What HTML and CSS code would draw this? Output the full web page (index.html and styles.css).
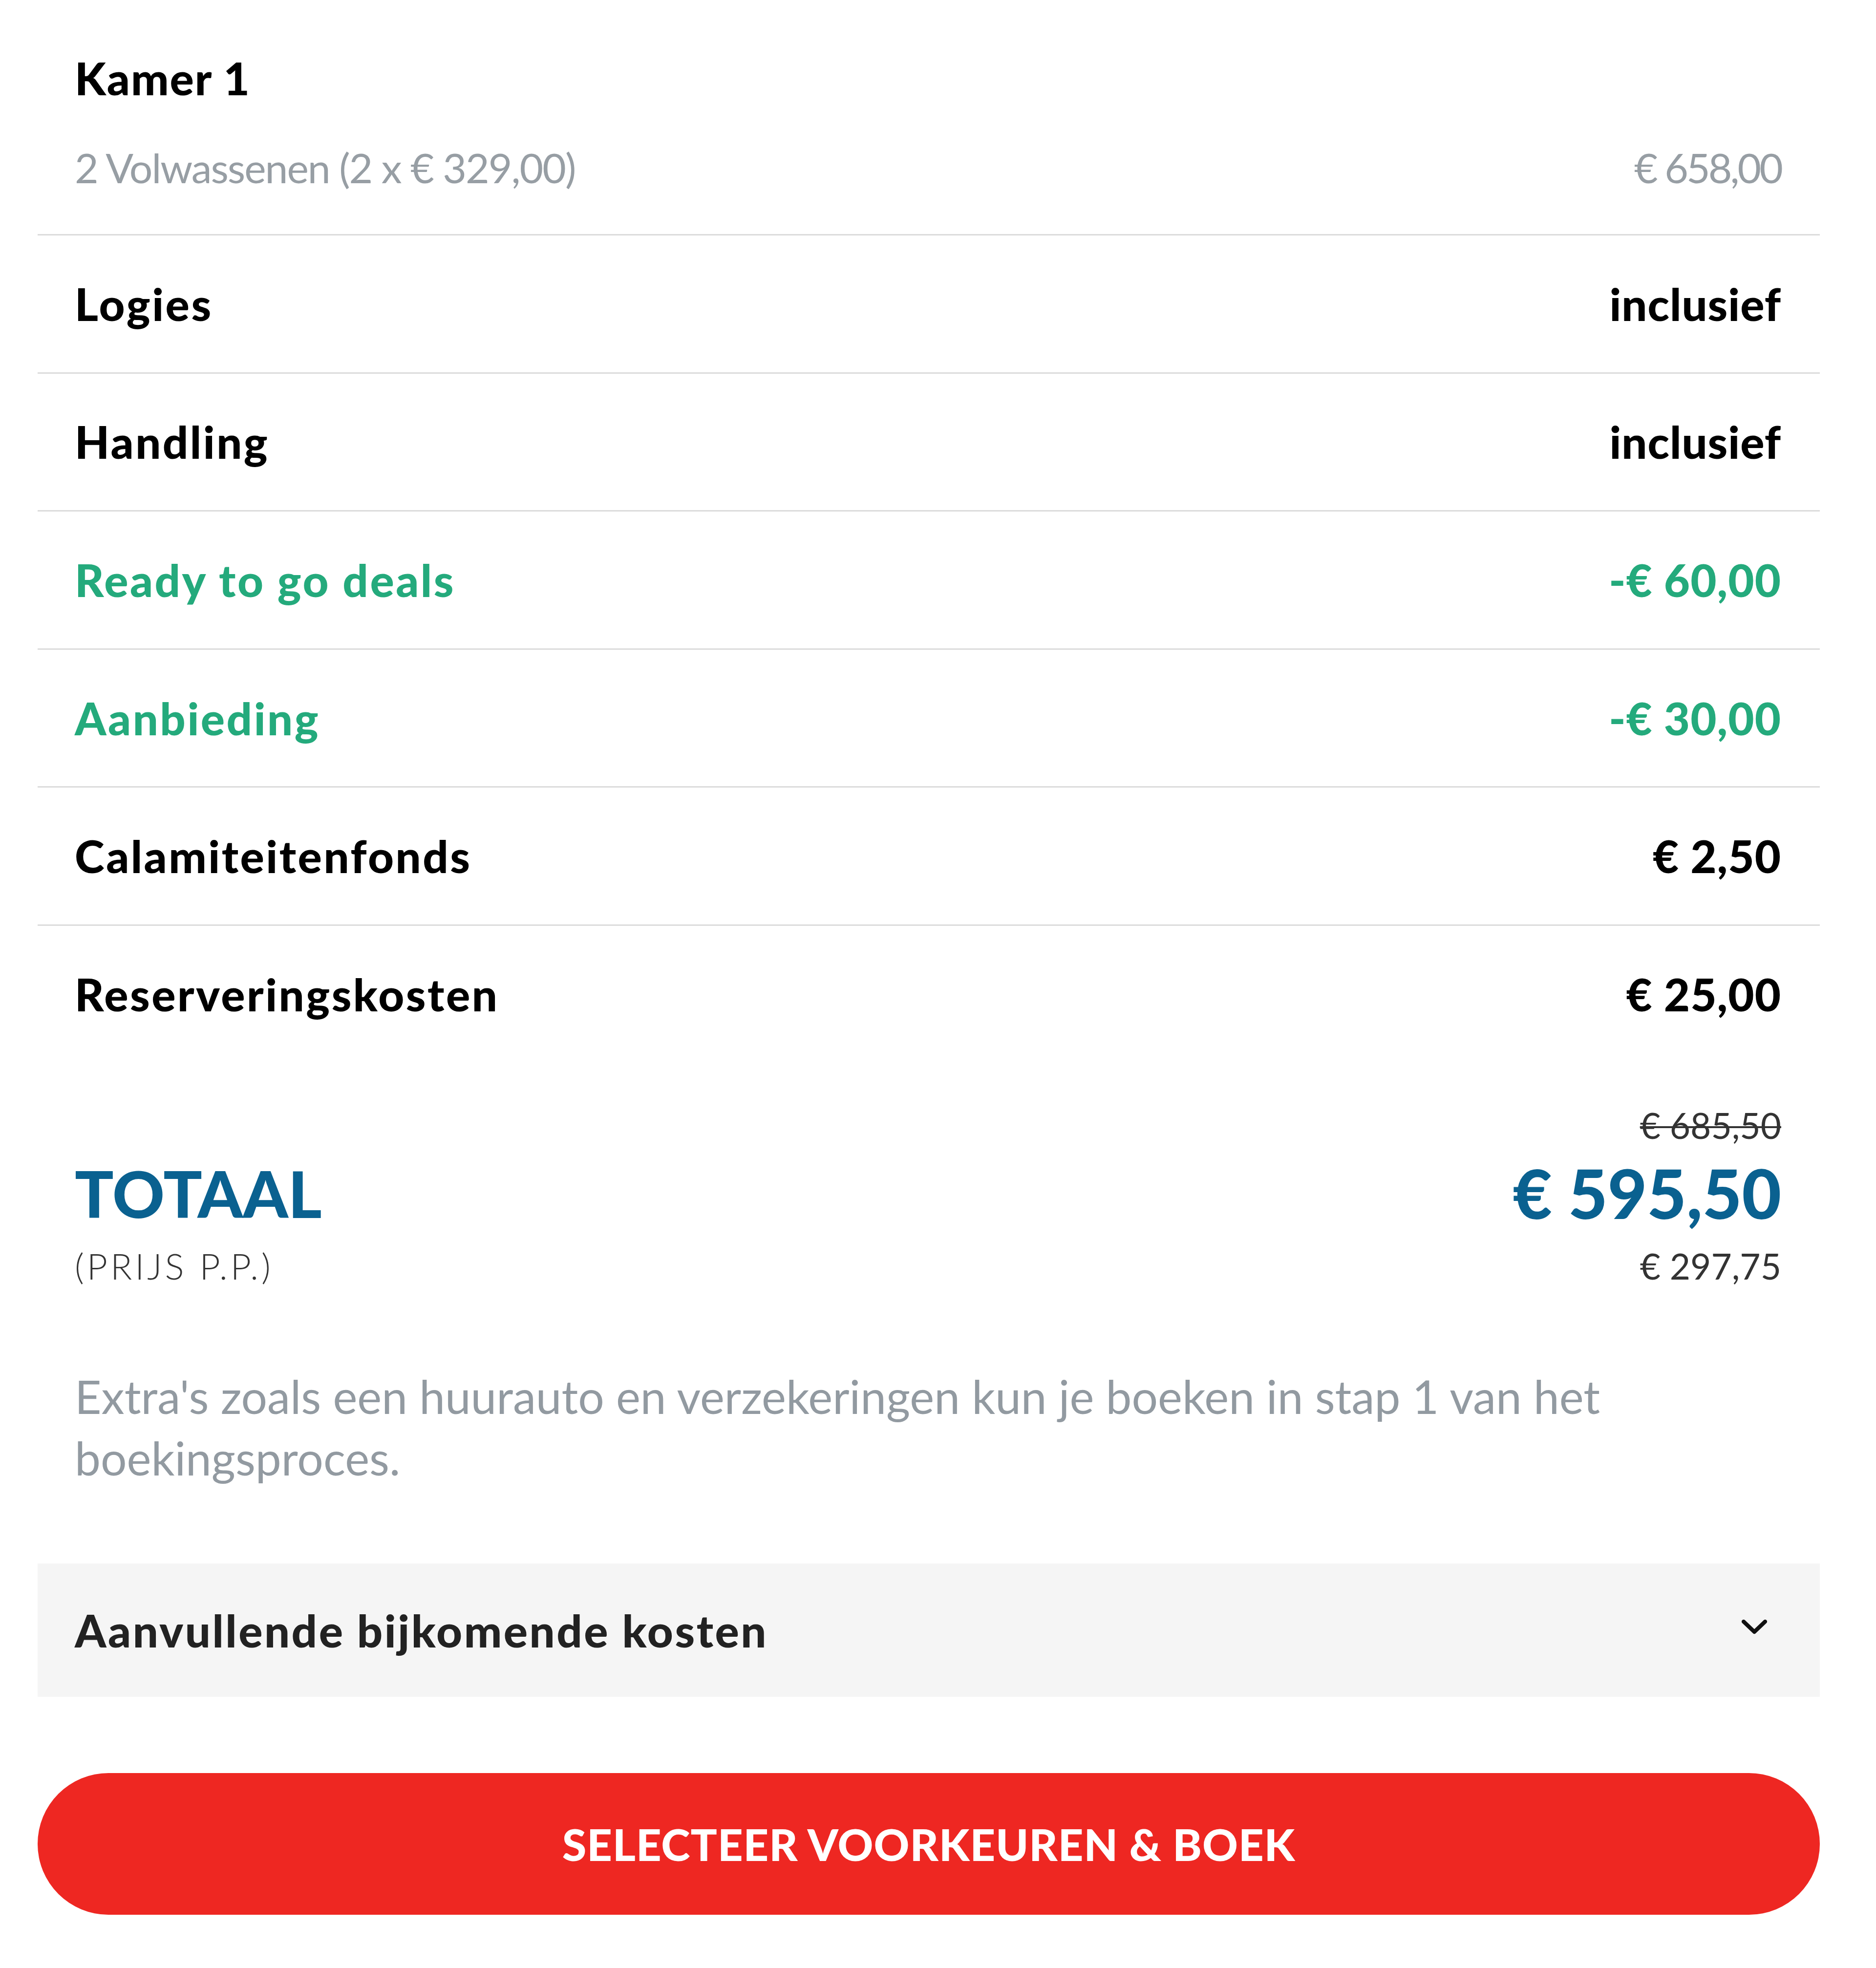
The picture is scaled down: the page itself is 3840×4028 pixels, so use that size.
FILE: index.html
```html
<!DOCTYPE html>
<html lang="nl">
<head>
<meta charset="utf-8">
<title>Prijsoverzicht</title>
<link rel="stylesheet" href="styles.css">
</head>
<body>
<main class="card">
  <section class="room">
    <div class="room-title">Kamer 1</div>
    <div class="room-line">
      <span>2 Volwassenen (2 x € 329,00)</span>
      <span class="room-price">€ 658,00</span>
    </div>
  </section>

  <div class="row"><span class="label">Logies</span><span class="value">inclusief</span></div>
  <div class="row"><span class="label">Handling</span><span class="value">inclusief</span></div>
  <div class="row discount"><span class="label">Ready to go deals</span><span class="value">-€ 60,00</span></div>
  <div class="row discount"><span class="label">Aanbieding</span><span class="value">-€ 30,00</span></div>
  <div class="row"><span class="label">Calamiteitenfonds</span><span class="value">€ 2,50</span></div>
  <div class="row"><span class="label">Reserveringskosten</span><span class="value">€ 25,00</span></div>

  <section class="total">
    <span class="old-price">€ 685,50</span>
    <span class="total-label">TOTAAL</span>
    <span class="total-price">€ 595,50</span>
    <span class="pp-label">(PRIJS P.P.)</span>
    <span class="pp-price">€ 297,75</span>
  </section>

  <p class="note">Extra's zoals een huurauto en verzekeringen kun je boeken in stap 1 van het boekingsproces.</p>

  <div class="accordion">
    <span>Aanvullende bijkomende kosten</span>
    <svg class="chevron" viewBox="0 0 52 30" aria-hidden="true"><path d="M4 4 L26 25 L48 4" fill="none" stroke="#111" stroke-width="8" stroke-linecap="round" stroke-linejoin="round"/></svg>
  </div>

  <button class="cta">SELECTEER VOORKEUREN &amp; BOEK</button>
</main>
</body>
</html>
```

FILE: styles.css
```css
html, body {
  margin: 0;
  padding: 0;
  background: #ffffff;
}

body {
  font-family: "Lato", "Liberation Sans", sans-serif;
  color: #000;
}

.card {
  margin-left: 77px;
  width: 3648px;
  display: flex;
  flex-direction: column;
}

.room {
  padding: 90px 79px 66px 76px;
}

.room-title {
  font-size: 92px;
  font-weight: 900;
  letter-spacing: 2px;
  line-height: 140px;
}

.room-line {
  margin-top: 43px;
  display: flex;
  justify-content: space-between;
  font-size: 84px;
  font-weight: 400;
  letter-spacing: -2px;
  line-height: 140px;
  color: #979ea4;
}

.room-price {
  letter-spacing: -4px;
}

.row {
  box-sizing: border-box;
  height: 282.6px;
  border-top: 3px solid #dcdcdc;
  padding: 0 79px 0 76px;
  display: flex;
  justify-content: space-between;
  align-items: center;
  font-size: 92px;
  font-weight: 900;
  line-height: 140px;
}

.label {
  letter-spacing: 3.5px;
}

.value {
  letter-spacing: 1px;
}

.row.discount {
  color: #24aa7c;
}

.total {
  margin-top: 88px;
  padding: 0 79px 0 76px;
  display: grid;
  grid-template-columns: 1fr auto;
  grid-template-rows: 80px 150px 100px;
  row-gap: 24px;
  align-items: center;
}

.old-price {
  grid-column: 2;
  grid-row: 1;
  justify-self: end;
  font-size: 73px;
  line-height: 80px;
  color: #333;
  text-decoration: line-through;
  text-decoration-thickness: 4px;
}

.total-label {
  grid-column: 1;
  grid-row: 2;
  font-size: 132px;
  font-weight: 900;
  line-height: 150px;
  color: #0a6190;
}

.total-price {
  grid-column: 2;
  grid-row: 2;
  justify-self: end;
  font-size: 139px;
  font-weight: 900;
  line-height: 150px;
  color: #0a6190;
}

.pp-label {
  grid-column: 1;
  grid-row: 3;
  font-size: 73px;
  font-weight: 300;
  letter-spacing: 6px;
  line-height: 100px;
  color: #333;
}

.pp-price {
  grid-column: 2;
  grid-row: 3;
  justify-self: end;
  font-size: 73px;
  font-weight: 400;
  line-height: 100px;
  color: #333;
}

.note {
  margin: 154px 0 0;
  padding: 0 79px 0 76px;
  max-width: 3250px;
  font-size: 94.5px;
  line-height: 126px;
  color: #929aa1;
}

.accordion {
  margin-top: 153px;
  height: 273px;
  box-sizing: border-box;
  padding: 0 108px 0 76px;
  background: #f5f5f5;
  display: flex;
  justify-content: space-between;
  align-items: center;
  font-size: 92px;
  font-weight: 900;
  letter-spacing: 3.5px;
  color: #222;
}

.chevron {
  width: 52px;
  height: 30px;
  margin-top: -12px;
}

.cta {
  margin-top: 156px;
  height: 290px;
  width: 100%;
  border: none;
  border-radius: 145px;
  background: #ee2722;
  color: #fff;
  font-family: "Lato", "Liberation Sans", sans-serif;
  font-size: 90px;
  font-weight: 900;
  letter-spacing: 1px;
  padding: 0;
  cursor: pointer;
}
```
